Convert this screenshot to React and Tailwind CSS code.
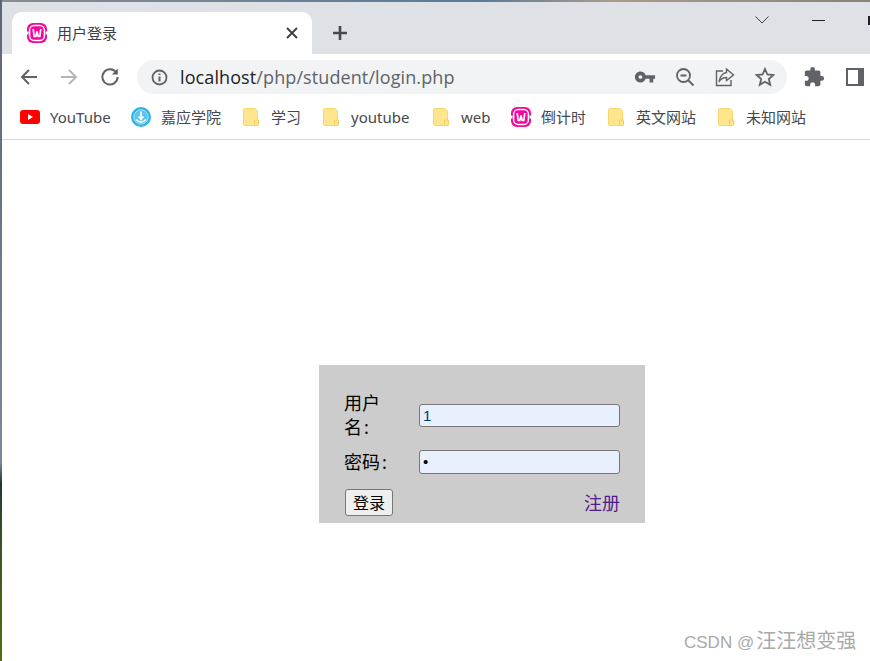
import React from "react";
import { MdVpnKey, MdExtension } from "react-icons/md";

const sans = "font-['Noto_Sans','Noto_Sans_CJK_SC',sans-serif]";

function Wamp() {
  return (
    <svg width="20" height="20" viewBox="0 0 20 20" className="shrink-0">
      <rect x="0" y="0" width="20" height="20" rx="6" fill="#f5069f" />
      <rect x="2.6" y="2.6" width="14.8" height="14.8" rx="4.5" fill="#f5069f" stroke="#fff" strokeWidth="1.5" />
      <rect x="0" y="8.5" width="1.5" height="3" fill="#fff" />
      <rect x="18.5" y="8.5" width="1.5" height="3" fill="#fff" />
      <path d="M6.2 6 L7.2 13.5 H8.8 L10 8.5 L11.2 13.5 H12.8 L13.8 6" fill="none" stroke="#fff" strokeWidth="1.7" />
    </svg>
  );
}

function Folder() {
  return (
    <svg width="16" height="18" viewBox="0 0 16 18" className="shrink-0">
      <path d="M2 0.5 H12 L14.5 3 V16 a1.5 1.5 0 0 1 -1.5 1.5 H2 a1.5 1.5 0 0 1 -1.5 -1.5 V2 a1.5 1.5 0 0 1 1.5 -1.5z" fill="#fee68e" stroke="#f7d76d" />
      <rect x="11.5" y="12" width="4" height="5.5" rx="1" fill="#fee68e" stroke="#f4cd55" />
    </svg>
  );
}

function YouTube() {
  return (
    <svg width="20" height="14" viewBox="0 0 20 14" className="shrink-0">
      <rect width="20" height="14" rx="3" fill="#f00" />
      <path d="M8 4 L13 7 L8 10z" fill="#fff" />
    </svg>
  );
}

function Campus() {
  return (
    <svg width="20" height="20" viewBox="0 0 20 20" className="shrink-0">
      <circle cx="10" cy="10" r="10" fill="#2fb4e6" />
      <circle cx="10" cy="10" r="7.2" fill="#58c6ee" stroke="#bfe9f8" strokeWidth="0.8" />
      <path d="M10 4.5 V12 M7.5 9.5 L10 12.3 L12.5 9.5 M5 12.5 Q10 17.5 15 12.5" fill="none" stroke="#fff" strokeWidth="1.7" />
    </svg>
  );
}

function Bookmark({ icon, label, gap = "gap-[10px]", width }) {
  return (
    <div className={`flex items-center ${gap} ${width}`}>
      {icon}
      <span className="text-[15px] leading-5 text-[#45484d] whitespace-nowrap">{label}</span>
    </div>
  );
}

function Nav({ d, color }) {
  return (
    <svg width="20" height="20" viewBox="0 0 20 20" fill="none" stroke={color} strokeWidth="2" className="shrink-0">
      <path d={d} />
    </svg>
  );
}

export default function App() {
  return (
    <div className={`relative w-[870px] h-[661px] overflow-hidden flex bg-white ${sans}`}>
      <div className="w-[2px] shrink-0 bg-[linear-gradient(180deg,#5c6674_0%,#7d8798_70%,#26392f_73%,#3f5a22_85%,#556b12_100%)]" />
      <div className="flex-1 min-w-0 flex flex-col">
        <div className="h-[2px] shrink-0 bg-[linear-gradient(90deg,#8a8d92_0%,#5b7a96_55%,#a89c8c_70%,#8b8378_100%)]" />
        {/* tab strip */}
        <div className="h-[52px] shrink-0 bg-[#dee1e6] flex items-end pl-[10px] relative">
          <div className="w-[300px] h-[42px] bg-white rounded-t-[10px] flex items-center pl-[15px] pr-[14px]">
            <Wamp />
            <span className="ml-[10px] text-[15px] leading-5 text-[#3c4043]">用户登录</span>
            <svg width="12" height="12" viewBox="0 0 12 12" className="ml-auto" stroke="#3c4043" strokeWidth="1.9" fill="none">
              <path d="M1 1 L11 11 M11 1 L1 11" />
            </svg>
          </div>
          <svg width="16" height="16" viewBox="0 0 16 16" className="ml-[20px] mb-[13px]" stroke="#45484d" strokeWidth="2.6" fill="none">
            <path d="M8 1 V15 M1 8 H15" />
          </svg>
          <div className="ml-auto self-start mt-[13px] flex items-center">
            <svg width="14" height="8" viewBox="0 0 14 8" fill="none" stroke="#3c4043" strokeWidth="1">
              <path d="M0.5 0.5 L7 7 L13.5 0.5" />
            </svg>
            <div className="ml-[43px] w-[13px] h-px bg-[#222] mt-px" />
            <div className="ml-[43px] w-[2px] h-[9px] bg-[#222] mt-px" />
          </div>
        </div>
        {/* toolbar */}
        <div className="h-[46px] shrink-0 flex items-center pl-[17px]">
          <Nav d="M18 10 H3 M10 3 L3 10 L10 17" color="#5f6368" />
          <div className="w-[20px]" />
          <Nav d="M2 10 H17 M10 3 L17 10 L10 17" color="#b4b6ba" />
          <div className="w-[20px]" />
          <svg width="20" height="20" viewBox="0 0 20 20" fill="none" stroke="#5f6368" strokeWidth="2" className="shrink-0 translate-x-px">
            <path d="M16.5 6 A7.6 7.6 0 1 0 17.6 10" />
            <path d="M17.8 1.5 V7.5 H11.8z" fill="#5f6368" stroke="none" />
          </svg>
          <div className="ml-[18px] w-[650px] h-[34px] rounded-full bg-[#f1f3f4] flex items-center pl-[14px]">
            <svg width="17" height="17" viewBox="0 0 17 17" className="shrink-0" fill="none" stroke="#5f6368">
              <circle cx="8.5" cy="8.5" r="7" strokeWidth="1.8" />
              <path d="M8.5 7.5 V12.5 M8.5 4.5 V6" strokeWidth="2" />
            </svg>
            <span className="ml-[12px] font-['Open_Sans','Noto_Sans',sans-serif] text-[18px] leading-6 tracking-[0.1px] text-[#5f6368] whitespace-nowrap">
              <span className="text-[#1f2124]">localhost</span>/php/student/login.php
            </span>
            <div className="ml-auto flex items-center pr-[12px] gap-[20px]">
              <MdVpnKey size={22} color="#5f6368" className="-mr-[1px]" />
              <svg width="20" height="20" viewBox="0 0 20 20" fill="none" stroke="#5f6368" strokeWidth="1.8">
                <circle cx="8.5" cy="8.5" r="6.5" />
                <path d="M5.5 8.5 H11.5 M13 13 L18.5 18.5" />
              </svg>
              <svg width="20" height="20" viewBox="0 0 20 20" fill="none" stroke="#5f6368" strokeWidth="1.4">
                <path d="M8 4 H1.5 V18.5 H16 V13" />
                <path d="M11.5 2 L18.5 8 L11.5 13.5 V10.5 C8 10.5 5.5 12 4 15 C4.5 10 7.5 6 11.5 5.5z" />
              </svg>
              <svg width="20" height="20" viewBox="0 0 20 20" fill="none" stroke="#5f6368" strokeWidth="1.8">
                <path d="M10 2 L12.4 7.5 L18.3 8 L13.8 12 L15.2 17.8 L10 14.7 L4.8 17.8 L6.2 12 L1.7 8 L7.6 7.5z" />
              </svg>
            </div>
          </div>
          <MdExtension size={22} color="#5f6368" className="ml-[16px] shrink-0" />
          <svg width="18" height="18" viewBox="0 0 18 18" className="ml-[21px] shrink-0">
            <rect x="1" y="1" width="16" height="16" fill="#fff" stroke="#5f6368" strokeWidth="2" />
            <rect x="12" y="1" width="5" height="16" fill="#5f6368" />
          </svg>
        </div>
        {/* bookmarks */}
        <div className="h-[40px] shrink-0 border-b border-[#d9dadc] flex items-center pl-[18px] pb-[5px]">
          <Bookmark icon={<YouTube />} label="YouTube" width="w-[111px]" />
          <Bookmark icon={<Campus />} label="嘉应学院" width="w-[112px]" />
          <Bookmark icon={<Folder />} label="学习" gap="gap-[12px]" width="w-[80px]" />
          <Bookmark icon={<Folder />} label="youtube" gap="gap-[12px]" width="w-[110px]" />
          <Bookmark icon={<Folder />} label="web" gap="gap-[12px]" width="w-[78px]" />
          <Bookmark icon={<Wamp />} label="倒计时" width="w-[97px]" />
          <Bookmark icon={<Folder />} label="英文网站" gap="gap-[12px]" width="w-[110px]" />
          <Bookmark icon={<Folder />} label="未知网站" gap="gap-[12px]" />
        </div>
        {/* page */}
        <div className="flex-1 pl-[317px] pt-[225px]">
          <div className="w-[326px] h-[158px] bg-[#cccccc] pl-[25px] pr-[25px] pt-[27px] text-[18px] leading-6 text-black flex flex-col">
            <div className="flex items-center h-[46px]">
              <label className="w-[75px] pr-[30px]">用户名<span className="ml-[2px]">:</span></label>
              <div className="flex-1 h-[23px] rounded-[3px] border border-[#767676] bg-[#e8f0fe] font-['Liberation_Sans',sans-serif] text-[15px] leading-[21px] pl-[3px] text-[#00396b]">1</div>
            </div>
            <div className="flex items-center h-[24px] mt-[12px]">
              <label className="w-[75px]">密码<span className="ml-[2px]">:</span></label>
              <div className="flex-1 h-[24px] rounded-[3px] border border-[#767676] bg-[#e8f0fe] font-['Liberation_Sans',sans-serif] text-[15px] leading-[22px] pl-[3px]">•</div>
            </div>
            <div className="flex items-center justify-between mt-[15px] pl-px">
              <button className="w-[48px] h-[27px] rounded-[3px] border border-[#767676] bg-[#efefef] text-[16px] leading-5">登录</button>
              <a className="text-[#551a8b]">注册</a>
            </div>
          </div>
        </div>
      </div>
      <div className="absolute left-[684px] top-[629px] font-['Liberation_Sans','Noto_Sans_CJK_SC',sans-serif] text-[17px] leading-6 text-[#a9a9a9] whitespace-nowrap">
        CSDN @<span className="text-[20px] ml-[2px]">汪汪想变强</span>
      </div>
    </div>
  );
}
